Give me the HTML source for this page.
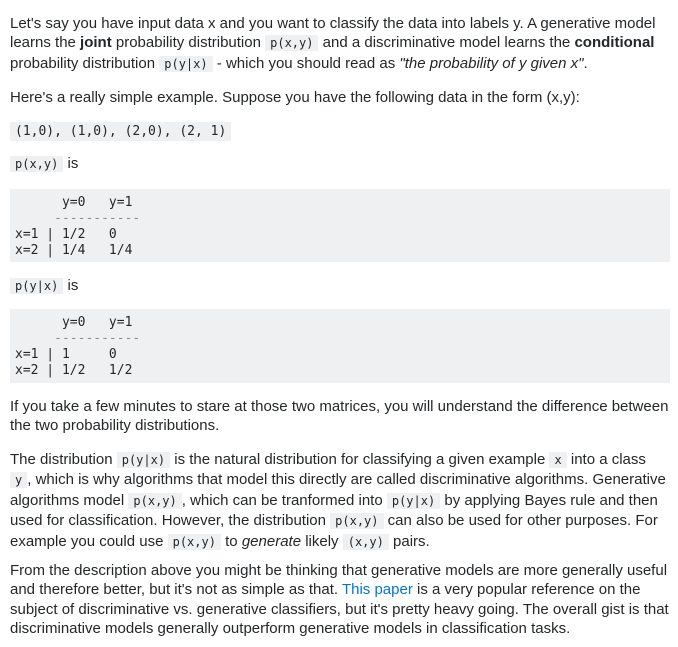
<!DOCTYPE html>
<html><head><meta charset="utf-8"><style>
body{margin:0;background:#fff;width:678px;height:647px;position:relative;overflow:hidden;font-family:"Liberation Sans",Arial,sans-serif;font-size:15px;color:#242729;}
.b{position:absolute;left:10px;width:668px;line-height:19.4px;margin:0;white-space:nowrap;}
code{font-family:"DejaVu Sans Mono","Liberation Mono",monospace;font-size:12px;background:#eff0f1;padding:1px 5px;}
pre{position:absolute;left:10px;width:650px;margin:0;background:#eff0f1;padding:6px 5px 3px;font-family:"DejaVu Sans Mono","Liberation Mono",monospace;font-size:13px;line-height:16px;color:#242729;}
.d{color:#8a8f94}
a{color:#0077cc;text-decoration:none}
</style></head><body>
<p class="b" style="top:14px">Let's say you have input data x and you want to classify the data into labels y. A generative model<br>learns the <b>joint</b> probability distribution <code>p(x,y)</code> and a discriminative model learns the <b>conditional</b><br>probability distribution <code>p(y|x)</code> - which you should read as <i>"the probability of y given x"</i>.</p>
<p class="b" style="top:88px">Here's a really simple example. Suppose you have the following data in the form (x,y):</p>
<p class="b" style="top:121px"><code style="padding:2px 5px;font-size:13px">(1,0), (1,0), (2,0), (2, 1)</code></p>
<p class="b" style="top:154px"><code>p(x,y)</code> is</p>
<pre style="top:189px;height:64px">      y=0   y=1
<span class="d">     -----------</span>
x=1 | 1/2   0
x=2 | 1/4   1/4</pre>
<p class="b" style="top:276px"><code>p(y|x)</code> is</p>
<pre style="top:309px;height:65px">      y=0   y=1
<span class="d">     -----------</span>
x=1 | 1     0
x=2 | 1/2   1/2</pre>
<p class="b" style="top:397px">If you take a few minutes to stare at those two matrices, you will understand the difference between<br>the two probability distributions.</p>
<p class="b" style="top:450px">The distribution <code>p(y|x)</code> is the natural distribution for classifying a given example <code>x</code> into a class<br><code>y</code>, which is why algorithms that model this directly are called discriminative algorithms. Generative<br>algorithms model <code>p(x,y)</code>, which can be tranformed into <code>p(y|x)</code> by applying Bayes rule and then<br>used for classification. However, the distribution <code>p(x,y)</code> can also be used for other purposes. For<br>example you could use <code>p(x,y)</code> to <i>generate</i> likely <code>(x,y)</code> pairs.</p>
<p class="b" style="top:561px">From the description above you might be thinking that generative models are more generally useful<br>and therefore better, but it's not as simple as that. <a>This paper</a> is a very popular reference on the<br>subject of discriminative vs. generative classifiers, but it's pretty heavy going. The overall gist is that<br>discriminative models generally outperform generative models in classification tasks.</p>
</body></html>
